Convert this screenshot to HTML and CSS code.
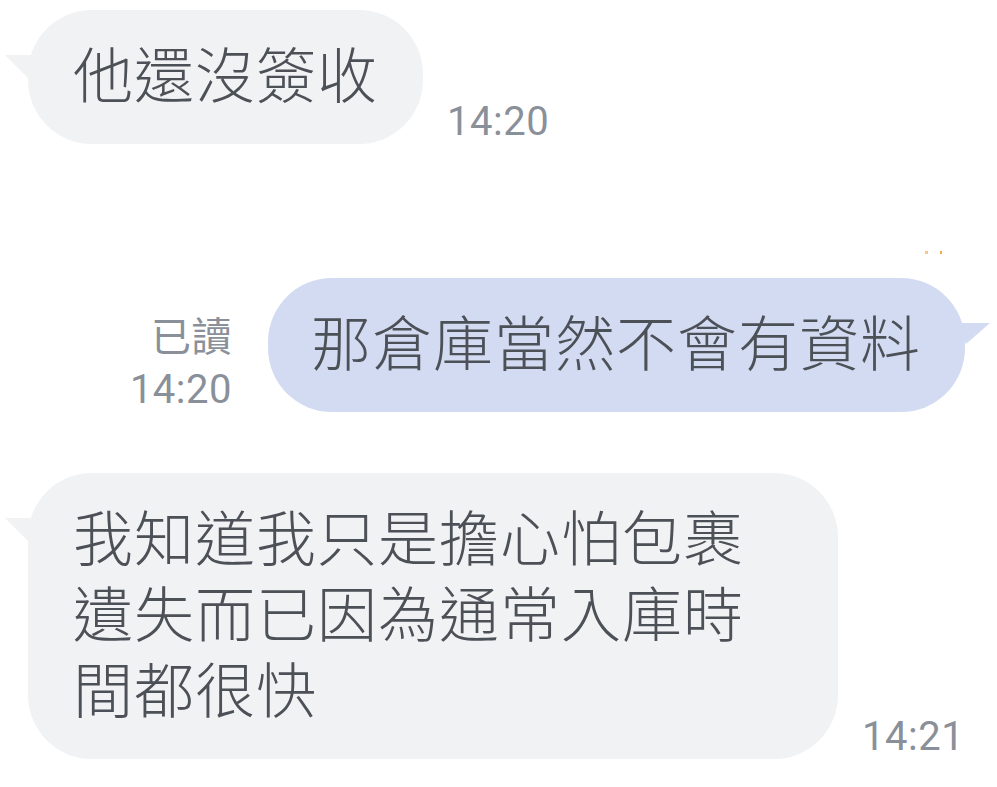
FILE: index.html
```html
<!DOCTYPE html>
<html lang="zh-Hant">
<head>
<meta charset="utf-8">
<title>Chat</title>
<link rel="stylesheet" href="styles.css">
</head>
<body>
<main class="chat">
  <div class="row">
    <div class="bubble in">他還沒簽收</div>
    <span class="time">14:20</span>
  </div>
  <div class="row row-out">
    <span class="spark" aria-hidden="true"></span>
    <div class="meta">
      <span class="meta-line">已讀</span>
      <span class="meta-line">14:20</span>
    </div>
    <div class="bubble out">那倉庫當然不會有資料</div>
  </div>
  <div class="row row-last">
    <div class="bubble in wide">我知道我只是擔心怕包裹遺失而已因為通常入庫時間都很快</div>
    <span class="time">14:21</span>
  </div>
</main>
</body>
</html>
```
FILE: styles.css
```css
* { box-sizing: border-box; }
html, body { margin: 0; background: #ffffff; }
body { width: 997px; height: 787px; overflow: hidden; }

.chat {
  display: flex;
  flex-direction: column;
  padding: 10px 32px 0 28px;
}

.row {
  display: flex;
  align-items: flex-end;
  gap: 24px;
}

.row-out {
  justify-content: flex-end;
  gap: 36px;
  margin-top: 134px;
  position: relative;
}

.row-last { margin-top: 61px; }

.bubble {
  position: relative;
  font-family: "Noto Sans CJK TC", "Noto Sans CJK SC", sans-serif;
  font-size: 60px;
  font-weight: 300;
  letter-spacing: 1px;
  line-height: 76px;
  color: #4c5057;
  padding: 24px 45px 34px;
  border-radius: 64px;
}

.in { background: #f1f2f4; }
.out { background: #d3dbf2; padding: 24px 44px 34px 43px; }
.wide { max-width: 810px; }

.in::before {
  content: "";
  position: absolute;
  left: -23px;
  top: 45px;
  width: 32px;
  height: 23px;
  background: #f1f2f4;
  clip-path: polygon(0 0, 100% 0, 23px 100%);
}

.out::after {
  content: "";
  position: absolute;
  right: -25px;
  top: 45px;
  width: 32px;
  height: 21px;
  background: #d3dbf2;
  clip-path: polygon(0 0, 100% 0, 8px 100%);
}

.time {
  font-family: Roboto, "Noto Sans CJK TC", sans-serif;
  font-size: 40px;
  line-height: 40px;
  letter-spacing: 0.5px;
  color: #8a9099;
  margin-bottom: 2px;
}

.meta {
  display: flex;
  flex-direction: column;
  align-items: flex-end;
  margin-bottom: -4px;
  font-family: Roboto, "Noto Sans CJK TC", sans-serif;
  font-size: 40px;
  letter-spacing: 0.5px;
  color: #8a9099;
}

.meta-line { line-height: 52px; }

.spark {
  position: absolute;
  top: -27px;
  right: 22px;
  width: 18px;
  height: 3px;
  background: linear-gradient(90deg, #f6c98a 0 3px, transparent 3px 15px, #f2a74a 15px 17px, transparent 17px);
}
```
